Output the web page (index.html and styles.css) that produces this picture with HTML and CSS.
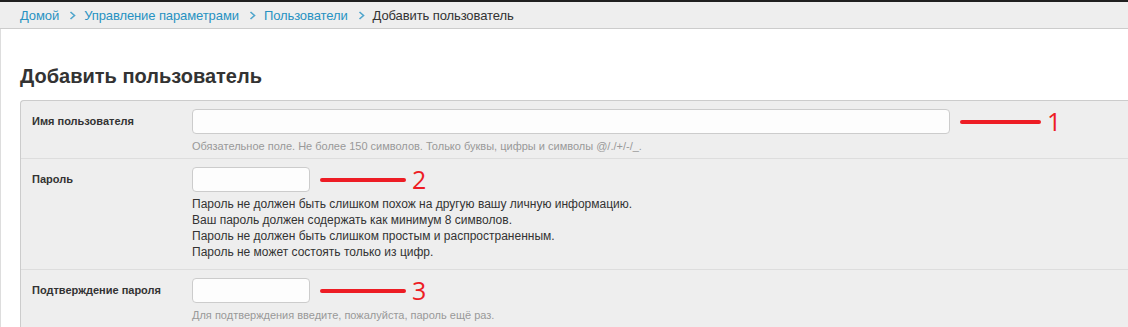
FILE: index.html
```html
<!DOCTYPE html>
<html lang="ru">
<head>
  <meta charset="UTF-8" />
  <title>Добавить пользователь</title>
  <link rel="stylesheet" href="styles.css">
</head>
<body>
  <div class="topbar"></div>

  <div class="breadcrumbs">
    <a href="#">Домой</a>
    <svg class="sep" width="7" height="9" viewBox="0 0 7 9"><polyline points="1.5,1 5.5,4.5 1.5,8" /></svg>
    <a href="#">Управление параметрами</a>
    <svg class="sep" width="7" height="9" viewBox="0 0 7 9"><polyline points="1.5,1 5.5,4.5 1.5,8" /></svg>
    <a href="#">Пользователи</a>
    <svg class="sep" width="7" height="9" viewBox="0 0 7 9"><polyline points="1.5,1 5.5,4.5 1.5,8" /></svg>
    <span class="current">Добавить пользователь</span>
  </div>

  <div class="content">
    <h1>Добавить пользователь</h1>

    <fieldset class="module">
      <div class="form-row">
        <label for="username">Имя пользователя</label>
        <div class="field">
          <div class="field-line">
            <input id="username" class="wide" type="text">
            <span class="mark"><i class="stroke s1"></i><b>1</b></span>
          </div>
          <div class="help">Обязательное поле. Не более 150 символов. Только буквы, цифры и символы @/./+/-/_.</div>
        </div>
      </div>

      <div class="form-row">
        <label for="password1">Пароль</label>
        <div class="field">
          <div class="field-line">
            <input id="password1" class="short" type="password">
            <span class="mark"><i class="stroke s2"></i><b>2</b></span>
          </div>
          <ul class="help-list">
            <li>Пароль не должен быть слишком похож на другую вашу личную информацию.</li>
            <li>Ваш пароль должен содержать как минимум 8 символов.</li>
            <li>Пароль не должен быть слишком простым и распространенным.</li>
            <li>Пароль не может состоять только из цифр.</li>
          </ul>
        </div>
      </div>

      <div class="form-row">
        <label for="password2">Подтверждение пароля</label>
        <div class="field">
          <div class="field-line">
            <input id="password2" class="short" type="password">
            <span class="mark"><i class="stroke s2"></i><b>3</b></span>
          </div>
          <div class="help">Для подтверждения введите, пожалуйста, пароль ещё раз.</div>
        </div>
      </div>
    </fieldset>
  </div>
</body>
</html>
```

FILE: styles.css
```css
body {
  margin: 0;
  padding: 0;
  font-family: "Liberation Sans", Arial, sans-serif;
  color: #333;
  background: #fff;
  overflow: hidden;
}

.topbar {
  height: 2px;
  background: #1f1f1f;
}

.breadcrumbs {
  display: flex;
  align-items: center;
  background: #eee;
  border-bottom: 1px solid #ccc;
  padding: 1px 0 0 20px;
  box-sizing: border-box;
  height: 27px;
  font-size: 13px;
  letter-spacing: -0.1px;
  white-space: nowrap;
}

.breadcrumbs a {
  color: #2792c2;
  text-decoration: none;
}

.breadcrumbs .sep {
  margin: 0 8px 0 10px;
  fill: none;
  stroke: #4fa5cc;
  stroke-width: 1.6;
}

.breadcrumbs .current {
  color: #333;
}

.content {
  border-left: 1px solid #ddd;
  padding: 35px 0 0 19px;
  min-height: 300px;
}

h1 {
  margin: 0 0 12px;
  font-size: 20px;
  line-height: 24px;
  font-weight: bold;
  color: #333;
}

.module {
  margin: 0;
  padding: 0;
  border: 1px solid #ccc;
  border-right: none;
  border-radius: 4px 0 0 0;
  background: #eee;
}

.form-row {
  display: flex;
  padding: 8px 0 5px 11px;
  border-bottom: 1px solid #ddd;
}

.form-row:last-child {
  border-bottom: none;
}

.form-row label {
  width: 160px;
  flex-shrink: 0;
  font-size: 11px;
  font-weight: bold;
  line-height: 25px;
  color: #333;
}

.field-line {
  display: flex;
  align-items: center;
}

input {
  height: 25px;
  box-sizing: border-box;
  border: 1px solid #ccc;
  border-radius: 4px;
  background: #fdfdfd;
  padding: 2px 5px;
  margin: 0;
  font-size: 13px;
}

input.wide { width: 758px; }
input.short { width: 118px; }

.mark {
  display: flex;
  align-items: center;
  margin-left: 10px;
}

.stroke {
  display: block;
  height: 4px;
  border-radius: 2px;
  background: #ed1c24;
}

.stroke.s1 { width: 81px; }
.stroke.s2 { width: 86px; }

.mark b {
  font-family: "Open Sans", sans-serif;
  font-weight: normal;
  font-size: 25px;
  line-height: 25px;
  color: #ed1c24;
  margin-left: 6px;
}

.help {
  margin-top: 5px;
  font-size: 11px;
  line-height: 14px;
  color: #999;
}

.help-list {
  list-style: none;
  margin: 4px 0;
  padding: 0;
  font-size: 12px;
  line-height: 16px;
  color: #333;
}
```
